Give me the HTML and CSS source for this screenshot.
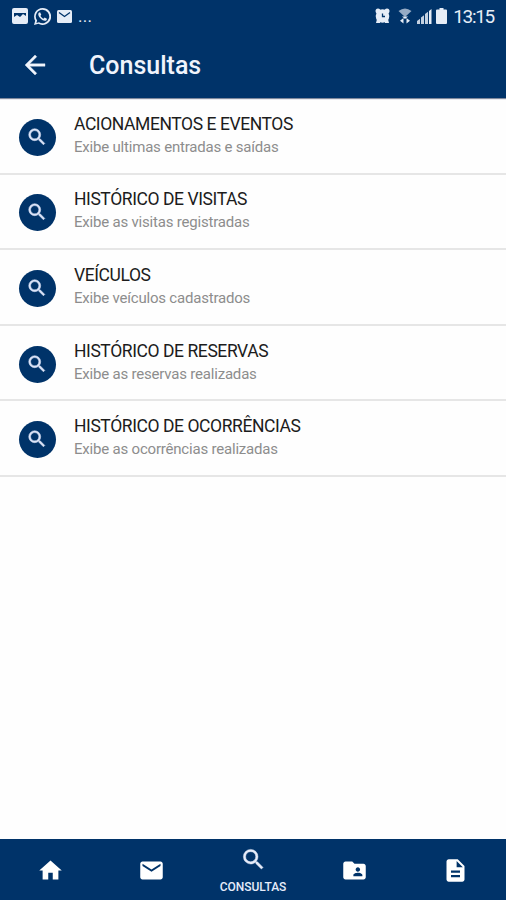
FILE: index.html
```html
<!DOCTYPE html>
<html lang="pt-BR">
<head>
    <meta charset="UTF-8">
    <meta name="viewport" content="width=device-width, initial-scale=1">
    <title>Consultas</title>
    <link rel="stylesheet" href="styles.css">
</head>
<body>

    <!-- Ícone usado na lista e no menu -->
    <svg class="sprite" width="0" height="0">
        <symbol id="lupa" viewBox="0 0 24 24">
            <path d="M15.5 14h-.79l-.28-.27A6.47 6.47 0 0 0 16 9.5 6.5 6.5 0 1 0 9.5 16c1.61 0 3.09-.59 4.23-1.57l.27.28v.79l5 4.99L20.49 19l-4.99-5zm-6 0a4.5 4.5 0 1 1 0-9 4.5 4.5 0 0 1 0 9z"/>
        </symbol>
    </svg>

    <header class="topo">
        <div class="status">
            <div class="status-esq">
                <svg width="16" height="16" viewBox="0 0 16 16"><path fill-rule="evenodd" d="M2 0h12a2 2 0 0 1 2 2v12a2 2 0 0 1-2 2H2a2 2 0 0 1-2-2V2a2 2 0 0 1 2-2zm0 5v4l3-2 3 2 3-3 3 2V5z"/></svg>
                <svg width="17" height="17" viewBox="0 0 24 24"><path d="M12 0a12 12 0 0 0-10.300 18L0 24l6.200-1.600A12 12 0 1 0 12 0zm0 2.500a9.500 9.500 0 1 1-5 17.600l-3.600 1 1-3.500A9.500 9.500 0 0 1 12 2.500z"/><path d="M8.600 6c-.8-.3-2.600 1-2.600 2.900 0 4 6 9.200 9.500 9.200 1.600 0 3-1.500 2.700-3l-3.200-1.700-1.600 1.700c-1.800-.6-3.600-2.400-4.300-4.200L10.300 9.500z"/></svg>
                <svg width="15" height="13" viewBox="0 0 15 13"><rect width="15" height="13" rx="1.500"/><path class="traco" d="M2 2.500l5.500 4 5.500-4"/></svg>
                <span class="pontos">...</span>
            </div>
            <div class="status-dir">
                <svg width="15" height="16" viewBox="0 0 15 16"><circle cx="3" cy="3" r="2.500"/><circle cx="12" cy="3" r="2.500"/><circle cx="7.500" cy="8" r="6.800"/><path d="M2 11h3v4H1zM13 11h-3v4h4z"/><path class="ponteiro" d="M7.500 5.500V8.500H10"/></svg>
                <svg class="wifi" width="14" height="16" viewBox="0 0 14 16"><path opacity=".65" d="M7 9L.5 3Q7-2 13.500 3z"/><path d="M4 8.500h6L7 11zM5.500 10v5.500l-3.500-2.700zM8.500 10v5.500l3.500-2.700z"/></svg>
                <svg class="sinal" width="15" height="15" viewBox="0 0 15 15"><path d="M0 15v-3l3-2.200V15zM4 15V8.500l3-2.200V15zM8 15V5l3-2.200V15z" opacity=".85"/><path d="M12 15V2l2.500-2v15z"/></svg>
                <svg class="bateria" width="11" height="16" viewBox="0 0 11 16"><path d="M3.500 0h4v1.500H10a1 1 0 0 1 1 1V15a1 1 0 0 1-1 1H1a1 1 0 0 1-1-1V2.500a1 1 0 0 1 1-1h2.500z"/></svg>
                <span class="hora">13:15</span>
            </div>
        </div>
        <div class="barra">
            <svg class="voltar" viewBox="0 0 24 24"><path d="M20 11H7.830l5.590-5.590L12 4l-8 8 8 8 1.410-1.410L7.830 13H20v-2z"/></svg>
            <h1>Consultas</h1>
        </div>
    </header>

    <main class="lista">
        <div class="item">
            <div class="bola"><svg><use href="#lupa"/></svg></div>
            <div class="texto">
                <h2>ACIONAMENTOS E EVENTOS</h2>
                <p>Exibe ultimas entradas e saídas</p>
            </div>
        </div>
        <div class="item">
            <div class="bola"><svg><use href="#lupa"/></svg></div>
            <div class="texto">
                <h2>HISTÓRICO DE VISITAS</h2>
                <p>Exibe as visitas registradas</p>
            </div>
        </div>
        <div class="item">
            <div class="bola"><svg><use href="#lupa"/></svg></div>
            <div class="texto">
                <h2>VEÍCULOS</h2>
                <p>Exibe veículos cadastrados</p>
            </div>
        </div>
        <div class="item">
            <div class="bola"><svg><use href="#lupa"/></svg></div>
            <div class="texto">
                <h2>HISTÓRICO DE RESERVAS</h2>
                <p>Exibe as reservas realizadas</p>
            </div>
        </div>
        <div class="item">
            <div class="bola"><svg><use href="#lupa"/></svg></div>
            <div class="texto">
                <h2>HISTÓRICO DE OCORRÊNCIAS</h2>
                <p>Exibe as ocorrências realizadas</p>
            </div>
        </div>
    </main>

    <nav class="menu">
        <a class="aba"><svg viewBox="0 0 24 24"><path d="M10 20v-6h4v6h5v-8h3L12 3 2 12h3v8z"/></svg></a>
        <a class="aba"><svg viewBox="0 0 24 24"><path d="M20 4H4c-1.100 0-1.990.9-1.990 2L2 18c0 1.100.9 2 2 2h16c1.100 0 2-.9 2-2V6c0-1.100-.9-2-2-2zm0 4l-8 5-8-5V6l8 5 8-5v2z"/></svg></a>
        <a class="aba ativa"><svg><use href="#lupa"/></svg><span>CONSULTAS</span></a>
        <a class="aba"><svg viewBox="0 0 24 24"><path d="M20 6h-8l-2-2H4c-1.100 0-1.990.9-1.990 2L2 18c0 1.100.9 2 2 2h16c1.100 0 2-.9 2-2V8c0-1.100-.9-2-2-2zm-5 3c1.100 0 2 .9 2 2s-.9 2-2 2-2-.9-2-2 .9-2 2-2zm4 8h-8v-1c0-1.330 2.670-2 4-2s4 .67 4 2v1z"/></svg></a>
        <a class="aba"><svg viewBox="0 0 24 24"><path d="M14 2H6c-1.100 0-1.990.9-1.990 2L4 20c0 1.100.89 2 1.990 2H18c1.100 0 2-.9 2-2V8l-6-6zm2 16H8v-2h8v2zm0-4H8v-2h8v2zm-3-5V3.500L18.500 9H13z"/></svg></a>
    </nav>

</body>
</html>
```

FILE: styles.css
```css
* {
    box-sizing: border-box;
}

body {
    margin: 0;
    height: 900px;
    display: flex;
    flex-direction: column;
    overflow: hidden;
    font-family: Roboto, "Liberation Sans", sans-serif;
    background-color: #fefefe;
}

svg {
    display: block;
    flex-shrink: 0;
    fill: currentColor;
}

.sprite {
    position: absolute;
}

/* Topo */
.topo {
    height: 98px;
    background-color: #003369;
    color: #f0f4fc;
    box-shadow: 0 1px 1px rgba(0, 20, 60, 0.5);
}

.status {
    height: 32px;
    padding: 0 12px;
    display: flex;
    justify-content: space-between;
    align-items: center;
}

.status-esq,
.status-dir {
    display: flex;
    align-items: center;
    color: #e6edf7;
}

.status-esq {
    gap: 6px;
}

.traco,
.ponteiro {
    fill: none;
    stroke: #003369;
    stroke-width: 1.3;
}

.pontos {
    font-size: 17px;
    line-height: 20px;
    letter-spacing: 0.3px;
}

.wifi {
    margin-left: 8px;
}

.sinal {
    margin-left: 5px;
}

.bateria {
    margin-left: 4px;
}

.hora {
    margin-left: 6px;
    font-size: 19px;
    letter-spacing: -1.3px;
}

.barra {
    height: 66px;
    padding-left: 20px;
    display: flex;
    align-items: center;
}

.voltar {
    width: 30px;
    height: 30px;
    stroke: currentColor;
    stroke-width: 0.3;
}

h1 {
    margin: 0 0 0 39px;
    font-size: 25px;
    font-weight: 500;
}

/* Lista */
.lista {
    flex: 1;
    padding-top: 1px;
}

.item {
    height: 75.6px;
    padding: 3px 19px 0;
    display: flex;
    align-items: center;
    border-bottom: 2px solid #e6e6e6;
}

.bola {
    width: 37px;
    height: 37px;
    border-radius: 50%;
    background-color: #003369;
    color: #dce4f8;
    display: flex;
    align-items: center;
    justify-content: center;
}

.bola svg {
    width: 22px;
    height: 22px;
    margin: 0 1px 1px 0;
    stroke: currentColor;
    stroke-width: 0.6;
}

.texto {
    margin-left: 18px;
    padding-bottom: 5px;
}

h2 {
    margin: 0;
    font-size: 17.5px;
    font-weight: 400;
    line-height: 24px;
    letter-spacing: -0.42px;
    color: #1c1c1c;
}

p {
    margin: 0;
    font-size: 15px;
    line-height: 22px;
    letter-spacing: -0.2px;
    color: #8d8d8d;
}

/* Menu inferior */
.menu {
    height: 61px;
    display: flex;
    background-color: #003369;
    color: #fff;
}

.aba {
    flex: 1;
    padding-top: 1px;
    display: flex;
    flex-direction: column;
    align-items: center;
    justify-content: center;
}

.aba svg {
    width: 27px;
    height: 27px;
}

.ativa {
    color: #e6ecfa;
}

.ativa svg {
    stroke: currentColor;
    stroke-width: 0.4;
}

.ativa span {
    margin-top: 7px;
    font-size: 12px;
    font-weight: 500;
    line-height: 14px;
}
```
